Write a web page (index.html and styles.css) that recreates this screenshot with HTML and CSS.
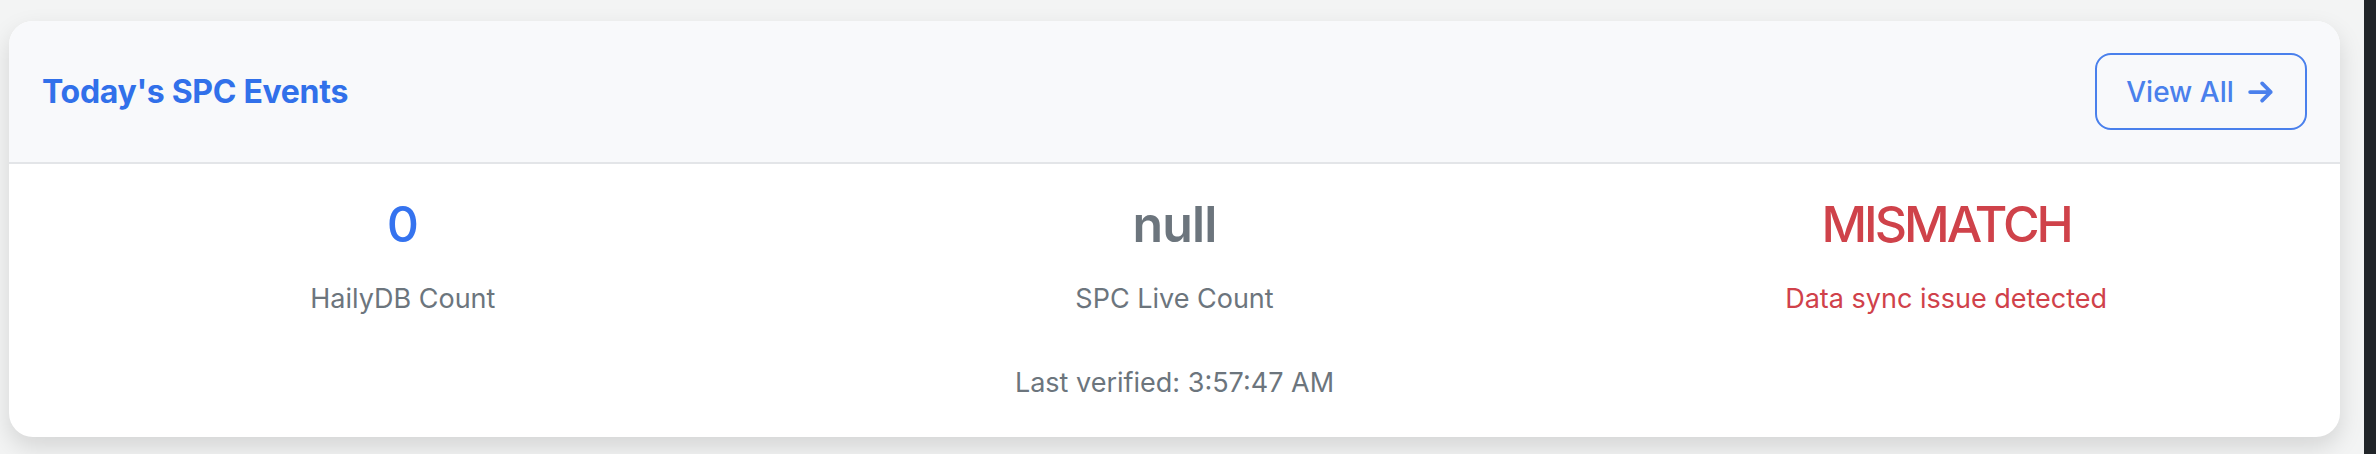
FILE: index.html
```html
<!DOCTYPE html>
<html lang="en">
<head>
<meta charset="utf-8">
<title>Today's SPC Events</title>
<link rel="stylesheet" href="styles.css">
</head>
<body>
<div class="page">
  <main class="main">
    <section class="card">
      <header class="card-header">
        <h5 class="title">Today's SPC Events</h5>
        <a class="btn" href="#">View All
          <svg class="arrow" viewBox="0 0 16 16" width="30" height="30" aria-hidden="true">
            <path d="M2.2 8h11M8.6 3.4 13.2 8l-4.6 4.6" fill="none" stroke="currentColor" stroke-width="2" stroke-linecap="round" stroke-linejoin="round"/>
          </svg>
        </a>
      </header>
      <div class="card-body">
        <div class="stat">
          <div class="num num-blue">0</div>
          <div class="label">HailyDB Count</div>
        </div>
        <div class="stat">
          <div class="num num-gray">null</div>
          <div class="label">SPC Live Count</div>
        </div>
        <div class="stat">
          <div class="num num-red">MISMATCH</div>
          <div class="label label-red">Data sync issue detected</div>
        </div>
        <div class="verified">Last verified: 3:57:47 AM</div>
      </div>
    </section>
  </main>
  <div class="strip"></div>
</div>
</body>
</html>
```
FILE: styles.css
```css
html, body {
  margin: 0;
  padding: 0;
}
body {
  background: #f3f4f4;
  font-family: Inter, "Noto Sans", "Liberation Sans", sans-serif;
  height: 454px;
  overflow: hidden;
}
.page {
  display: flex;
  height: 454px;
}
.main {
  flex: 1;
  padding: 21px 24px 0 9px;
}
.strip {
  width: 12px;
  background: #212529;
}
.card {
  background: #fff;
  border-radius: 24px;
  box-shadow: 0 10px 24px rgba(0, 0, 0, 0.13);
  height: 416px;
  overflow: hidden;
  display: flex;
  flex-direction: column;
}
.card-header {
  height: 143px;
  box-sizing: border-box;
  background: #f8f9fb;
  border-bottom: 2px solid #e3e5e8;
  display: flex;
  align-items: center;
  justify-content: space-between;
  padding: 0 33px 0 33px;
  flex: none;
}
.title {
  margin: 0;
  font-size: 32px;
  font-weight: 700;
  color: #3170ea;
  letter-spacing: -0.3px;
}
.btn {
  width: 212px;
  height: 77px;
  box-sizing: border-box;
  border: 2px solid #4a80ec;
  border-radius: 16px;
  display: flex;
  align-items: center;
  justify-content: center;
  gap: 12px;
  color: #4a80ec;
  text-decoration: none;
  font-size: 28px;
  font-weight: 500;
}
.arrow {
  display: block;
}
.card-body {
  display: grid;
  grid-template-columns: 1fr 1fr 1fr;
  padding: 32px 8px 0 8px;
}
.stat {
  text-align: center;
}
.num {
  font-size: 50px;
  font-weight: 500;
  line-height: 57.6px;
}
.num-blue { color: #3573ef; }
.num-gray { color: #6c757d; font-weight: 600; letter-spacing: -0.8px; }
.num-red { color: #cf424a; letter-spacing: -3px; }
.label {
  margin-top: 25px;
  font-size: 27px;
  line-height: 40px;
  color: #6c757d;
}
.label-red { color: #d0414a; }
.verified {
  grid-column: 1 / -1;
  text-align: center;
  margin-top: 44px;
  font-size: 27px;
  line-height: 40px;
  color: #6c757d;
}
```
